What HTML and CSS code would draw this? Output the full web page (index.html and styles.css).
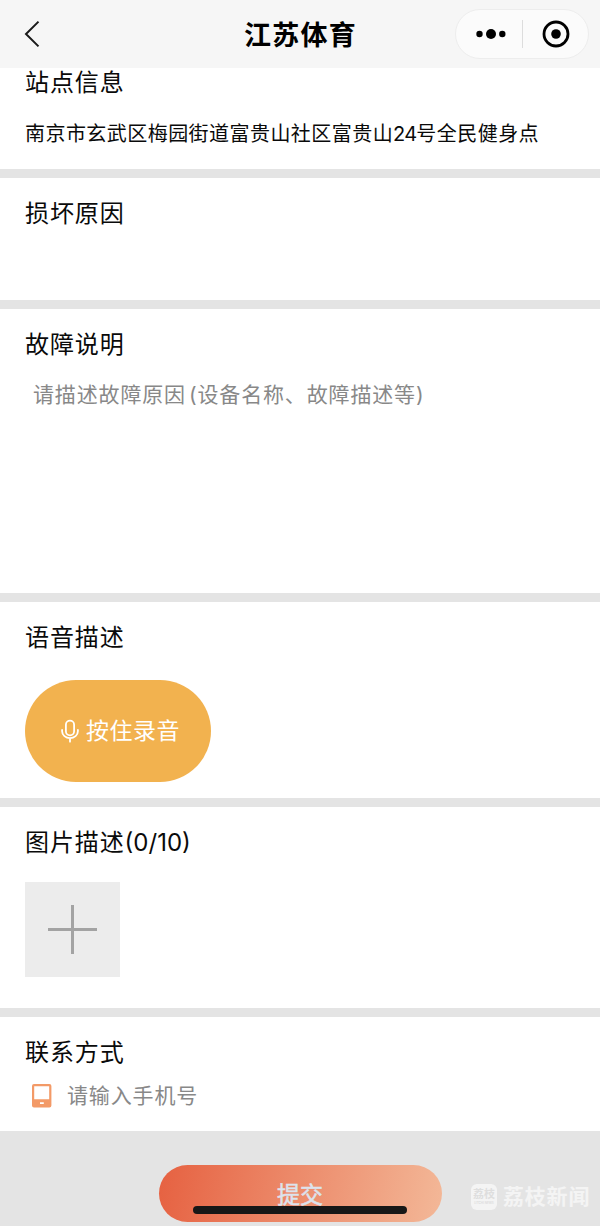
FILE: index.html
```html
<!DOCTYPE html>
<html lang="zh-CN">
<head>
	<meta charset="UTF-8">
	<title>江苏体育</title>
	<link rel="stylesheet" href="styles.css">
</head>
<body>
	<div class="header">
		<svg class="back" width="16" height="28" viewBox="0 0 16 28"><path d="M14.5 1.6L2 14l12.5 12.4" fill="none" stroke="#1a1a1a" stroke-width="2"/></svg>
		<h1>江苏体育</h1>
		<div class="capsule">
			<svg class="more" width="30" height="12" viewBox="0 0 30 12"><circle cx="3.5" cy="6" r="3.2"/><circle cx="15" cy="6" r="5"/><circle cx="26.3" cy="6" r="3.2"/></svg>
			<i class="line"></i>
			<svg class="close" width="28" height="28" viewBox="0 0 28 28"><circle cx="14" cy="14" r="12" fill="none" stroke="#000" stroke-width="2.8"/><circle cx="14" cy="14" r="4.8"/></svg>
		</div>
	</div>

	<div class="item site">
		<h2>站点信息</h2>
		<p class="address">南京市玄武区梅园街道富贵山社区富贵山<span class="num">24</span>号全民健身点</p>
	</div>
	<div class="item reason">
		<h2>损坏原因</h2>
	</div>
	<div class="item fault">
		<h2>故障说明</h2>
		<p class="tips">请描述故障原因<span class="bracket">(</span>设备名称、故障描述等)</p>
	</div>
	<div class="item voice">
		<h2>语音描述</h2>
		<div class="record">
			<svg width="18" height="24" viewBox="0 0 18 24" fill="none" stroke="#fff" stroke-width="1.8" stroke-linecap="round"><rect x="4.9" y="1.7" width="8.200" height="14.600" rx="4.100"/><path d="M1.100 11v1.300a7.900 6.900 0 0 0 15.800 0V11M9 19.200v3.500"/></svg>
			<span>按住录音</span>
		</div>
	</div>
	<div class="item photo">
		<h2>图片描述<span class="count">(0/10)</span></h2>
		<div class="add"><svg width="49" height="49" viewBox="0 0 49 49"><path d="M24.500 0v49M0 24.500h49" stroke="#a3a3a3" stroke-width="3"/></svg></div>
	</div>
	<div class="item contact">
		<h2>联系方式</h2>
		<div class="phone">
			<svg width="20" height="24" viewBox="0 0 20 24"><path fill="#f39a67" fill-rule="evenodd" d="M2 0h15.400a2 2 0 0 1 2 2v19.500a2 2 0 0 1-2 2H2a2 2 0 0 1-2-2V2a2 2 0 0 1 2-2zM2.200 2.300v13h15v-13zM8 18.300v1.800h3.800v-1.800z"/></svg>
			<span>请输入手机号</span>
		</div>
	</div>

	<div class="footer">
		<div class="submit">提交</div>
	</div>
	<div class="home-bar"></div>
	<div class="watermark">
		<div class="logo">荔枝<small>LITCHI NEWS</small></div>
		<span>荔枝新闻</span>
	</div>
</body>
</html>
```
FILE: styles.css
```css
*{box-sizing:border-box;}
body{position:relative;margin:0;width:600px;height:1226px;overflow:hidden;background:#e4e4e4;color:#0a0a0a;font-family:Inter,"Noto Sans CJK SC",sans-serif;}
h1,h2,p{margin:0;font-weight:normal;}
svg{display:block;flex:none;}

.header{display:grid;grid-template-columns:1fr auto 1fr;align-items:center;height:68px;padding:0 11px 0 24px;background:#f6f6f6;}
.header h1{margin-right:12px;padding-top:3px;font-size:27px;font-weight:bold;line-height:40px;letter-spacing:1.2px;color:#000;}
.capsule{display:flex;align-items:center;justify-self:end;width:134px;height:50px;padding-left:20px;border:1px solid #ededed;border-radius:25px;background:#fbfbfb;}
.capsule .line{width:1px;height:28px;margin:0 19px 0 16px;background:#ddd;}

.item{padding:18px 25px 0;background:#fff;border-bottom:9px solid #e4e4e4;}
.item h2{font-size:24px;line-height:36px;letter-spacing:.9px;}

.site{height:110px;padding-top:0;}
.site h2{line-height:30px;}
.address{margin-top:21px;font-size:20px;line-height:30px;letter-spacing:.45px;white-space:nowrap;}
.num{letter-spacing:-.8px;}
.reason{height:131px;}
.fault{height:293px;}
.tips{margin:16px 0 0 8px;font-size:21px;line-height:32px;letter-spacing:.85px;color:#888;}
.bracket{margin-left:3px;}

.voice{height:205px;}
.record{display:flex;align-items:center;gap:7px;width:186px;height:102px;margin-top:24px;padding-left:36px;border-radius:51px;background:#f2b24f;color:#fff;font-size:23px;line-height:34px;letter-spacing:.5px;}

.photo{height:210px;}
.count{letter-spacing:0;}
.add{display:flex;align-items:center;justify-content:center;width:95px;height:95px;margin-top:21px;background:#ececec;}

.contact{height:114px;border-bottom:0;}
.phone{display:flex;align-items:center;gap:15px;margin:9px 0 0 7px;font-size:21px;line-height:32px;letter-spacing:.85px;color:#888;}

.footer{padding-top:34px;}
.submit{width:283px;height:57px;margin:0 auto;border-radius:29px;background:linear-gradient(100deg,#e66141,#f3b898);color:#dce3ed;font-size:23px;line-height:60px;text-align:center;-webkit-text-stroke:.5px #dce3ed;}

.home-bar{position:absolute;left:193px;top:1206px;width:214px;height:8px;border-radius:4px;background:#171717;}
.watermark{position:absolute;left:471px;top:1182px;display:flex;align-items:center;gap:6px;color:#f4f4f4;font-size:21px;font-weight:bold;line-height:30px;letter-spacing:.8px;white-space:nowrap;}
.logo{width:26px;height:26px;padding-top:3px;border-radius:6px;background:#f4f4f4;color:#dedede;font-size:11px;line-height:14px;letter-spacing:0;text-align:center;}
.logo small{display:block;font-size:3px;line-height:4px;}
```
